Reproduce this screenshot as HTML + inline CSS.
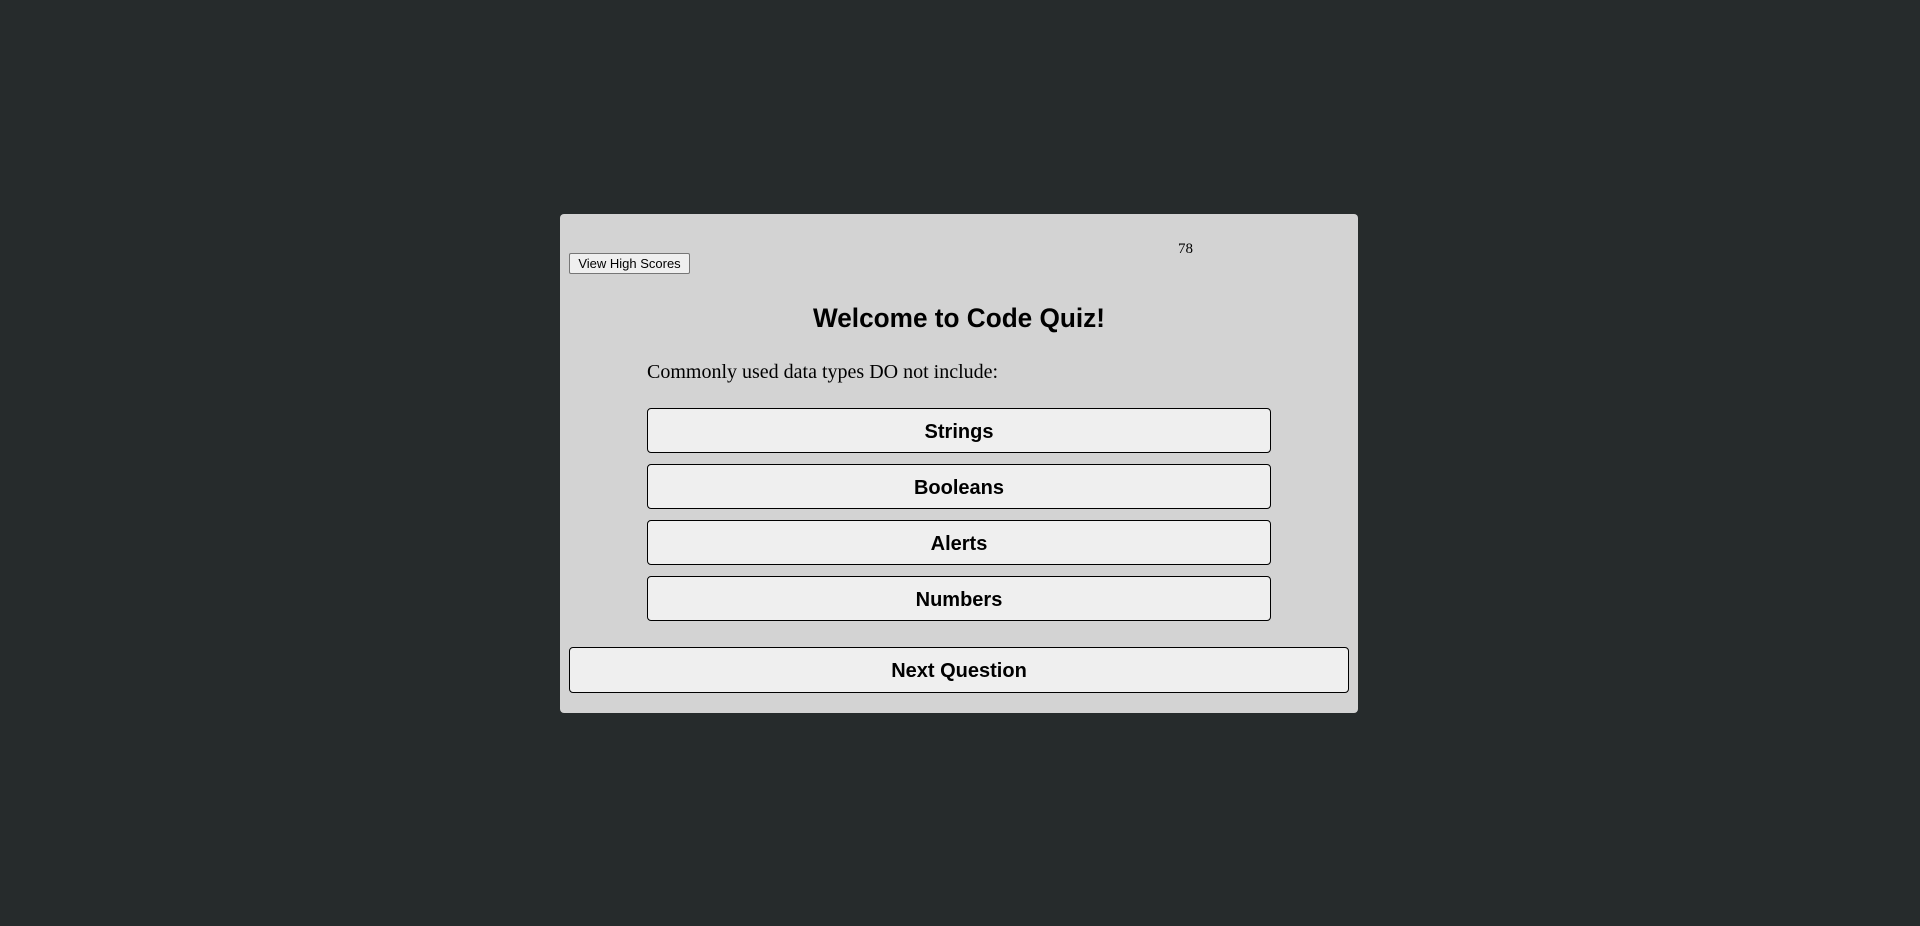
<!DOCTYPE html>
<html><head><style>
body{margin:0;width:1920px;height:926px;background:#262b2c;position:relative;overflow:hidden;font-family:"Liberation Sans",sans-serif}
.panel{position:absolute;left:560px;top:214px;width:798px;height:499px;background:#d3d3d3;border-radius:4px}
.abs{position:absolute}
.hs{left:569px;top:253px;width:121px;height:21px;box-sizing:border-box;background:#efefef;border:1px solid #767676;border-radius:2px;font-size:13px;line-height:19px;text-align:center;color:#000}
.btn{position:absolute;box-sizing:border-box;background:#efefef;border:1px solid #000;border-radius:4px;font-weight:bold;font-size:20px;text-align:center;line-height:47px;color:#000}
</style></head><body>
<div class="panel"></div>
<div class="abs hs">View High Scores</div>
<div class="abs" style="left:1178px;top:241px;font-family:'Liberation Serif',serif;font-size:15px">78</div>
<div class="abs" style="left:560px;width:798px;top:303px;text-align:center;font-weight:bold;font-size:27px;transform:scaleX(0.97)">Welcome to Code Quiz!</div>
<div class="abs" style="left:647px;top:361px;font-family:'Liberation Serif',serif;font-size:20px">Commonly used data types DO not include:</div>
<div class="btn" style="left:647px;top:408px;width:624px;height:45px">Strings</div>
<div class="btn" style="left:647px;top:464px;width:624px;height:45px">Booleans</div>
<div class="btn" style="left:647px;top:520px;width:624px;height:45px">Alerts</div>
<div class="btn" style="left:647px;top:576px;width:624px;height:45px">Numbers</div>
<div class="btn" style="left:569px;top:647px;width:780px;height:46px">Next Question</div>
</body></html>
